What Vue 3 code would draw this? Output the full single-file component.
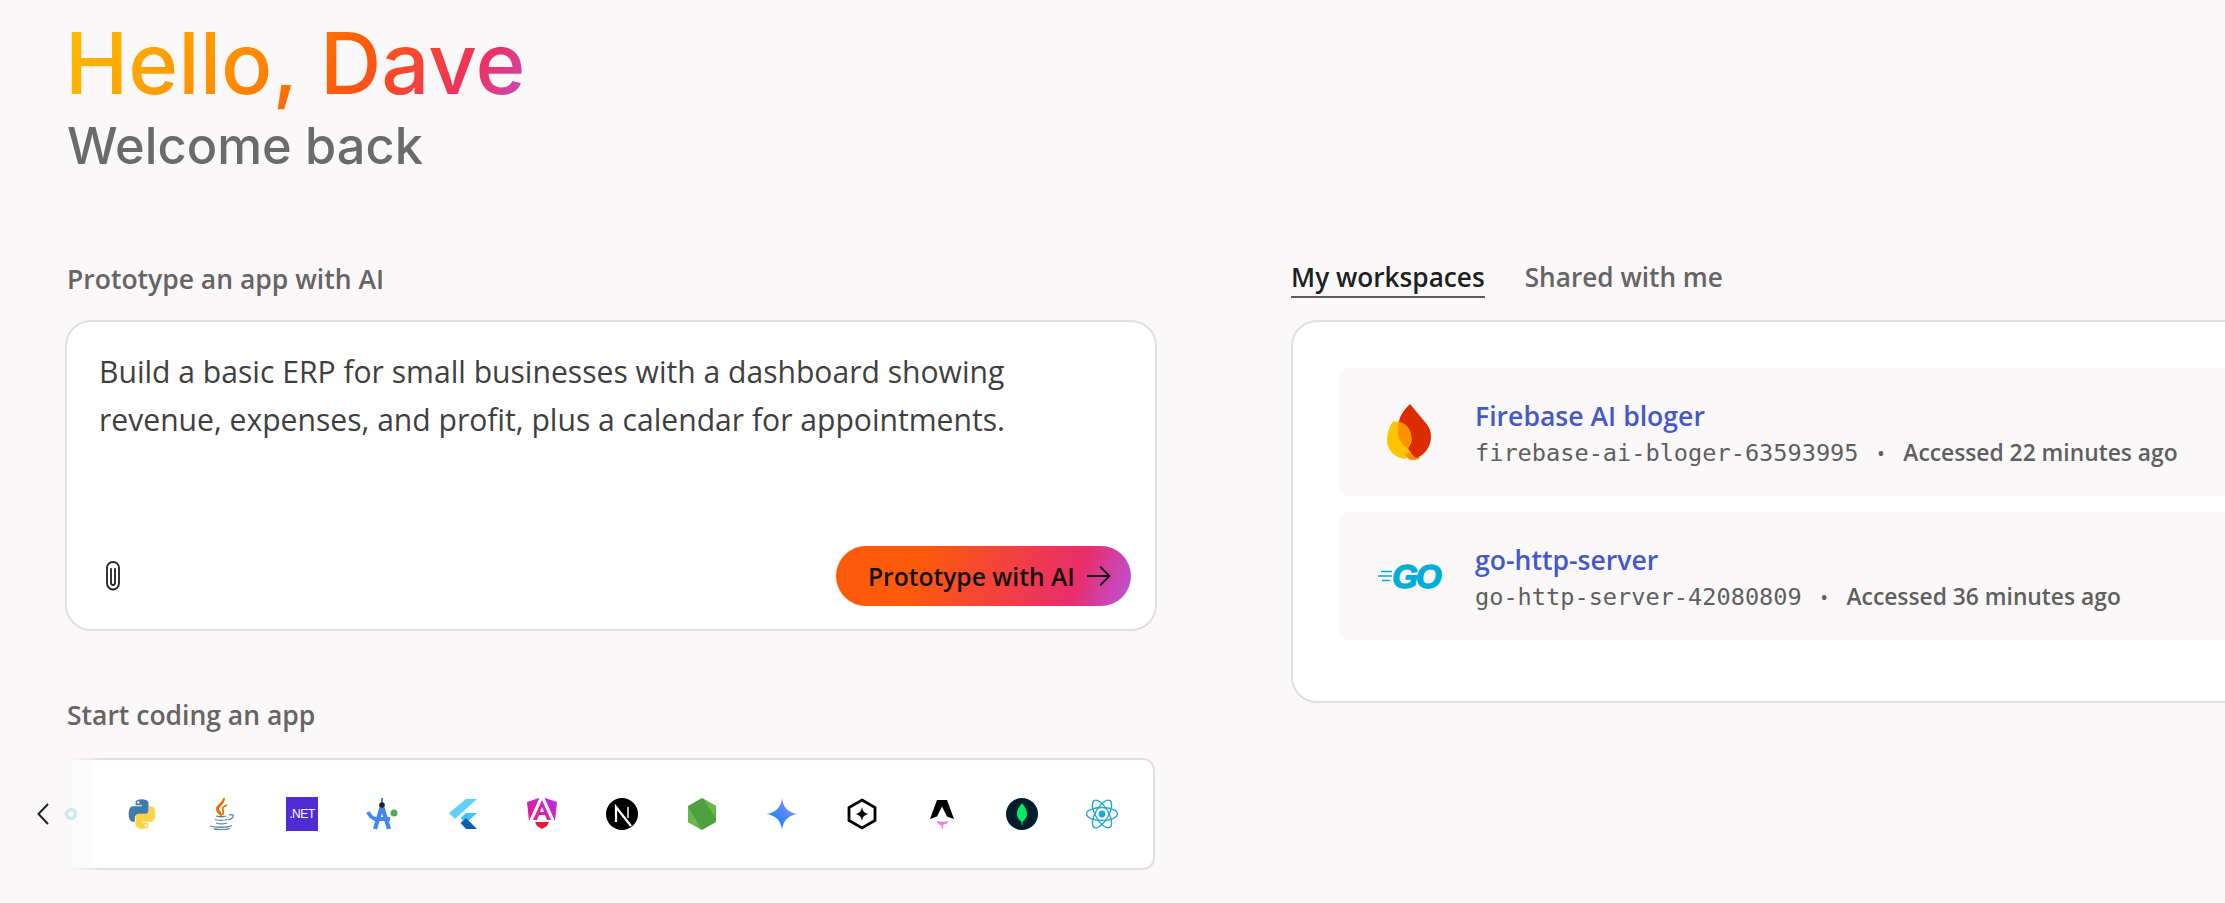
<script setup>
const accent = 'Prototype with AI'
</script>

<template>
  <main class="page">
    <header class="head">
      <h1 class="hello">Hello, Dave</h1>
      <p class="welcome">Welcome back</p>
    </header>

    <div class="cols">
      <section class="left">
        <h2 class="label first">Prototype an app with AI</h2>
        <div class="prompt">
          <p class="prompt-text">Build a basic ERP for small businesses with a dashboard showing revenue, expenses, and profit, plus a calendar for appointments.</p>
          <div class="prompt-foot">
            <svg class="clip" viewBox="0 0 16 30" fill="none" stroke="#1f1f1f" stroke-width="1.800" stroke-linecap="round">
              <path d="M2 6.500a6 5.500 0 0 1 12 0V22a6 6.500 0 0 1-12 0z" />
              <path d="M6 8v13.500a2 2.500 0 0 0 4 0V8" />
            </svg>
            <button class="cta">
              <span>{{ accent }}</span>
              <svg viewBox="0 0 26 22" width="26" height="22" fill="none" stroke="#111" stroke-width="2"><path d="M0 11h24M14 1l10 10-10 10" /></svg>
            </button>
          </div>
        </div>

        <h2 class="label second">Start coding an app</h2>
        <div class="strip">
          <svg class="chev" viewBox="0 0 12 22" fill="none" stroke="#222" stroke-width="2"><path d="M11 1 1.500 11 11 21" /></svg>
          <div class="icons">
            <svg class="ic ghost" viewBox="0 0 32 32" fill="none" stroke="#5fc0dc" stroke-width="3.500"><circle cx="25" cy="16" r="4.500" /></svg>

            <svg class="ic" viewBox="0 0 24 24">
              <path fill="#3f7cad" d="M11.900 1C6.900 1 7.200 3.200 7.200 3.200v2.300h4.800v.7H5.300S2 5.800 2 11.900s2.900 5.900 2.900 5.900h1.700v-2.800s-.1-2.900 2.800-2.900h4.800s2.700 0 2.700-2.600V4.100S17 1 11.900 1z" />
              <path fill="#ffd343" d="M12.100 23c5 0 4.700-2.200 4.700-2.200v-2.300H12v-.7h6.700s3.300.4 3.300-5.700-2.900-5.900-2.900-5.900h-1.700V9s.1 2.900-2.800 2.900H9.800s-2.700 0-2.700 2.600v5.400S6.900 23 12.100 23z" />
              <circle cx="9.200" cy="3.400" r=".9" fill="#fff" /><circle cx="14.800" cy="20.600" r=".9" fill="#fff" />
            </svg>

            <svg class="ic" viewBox="0 0 32 32" fill="none">
              <path stroke="#e76f00" stroke-width="1.700" d="M18 0c1 5-6 8-6 11 0 2 3 3 3 6-2-2-5-3-4-7 1-4 7-5 7-10zM21 7c-4 2-5 3-4 5 .5 1.500 1 2-.5 5" />
              <path stroke="#5382a1" stroke-width="1.300" d="M10 18c3 1 8 1 10 0M9 21.500c3 1 9 1 12 0M23 17c3-1 5 0 4 2s-3 2-5 3M10 25c3 1 8 1 11 0M4 28c4 1.500 18 2 22-.5M8 31c5 .7 12 .7 16-.5" />
            </svg>

            <div class="net"><span>.NET</span></div>

            <svg class="ic" viewBox="0 0 32 32" fill="none" stroke="#4285f4">
              <circle cx="28" cy="15" r="3.500" fill="#4fa85a" stroke="none" />
              <path stroke-width="2" d="M16 0v6" />
              <path stroke-width="4.200" d="M16 8 9 31M16 8l7 23" />
              <path stroke-width="3.800" d="M2 14c2 4 4 6 7 7h15" />
              <circle cx="16" cy="7" r="2.800" fill="#202124" stroke="none" />
            </svg>

            <svg class="ic" viewBox="0 0 32 32">
              <path fill="#5fd0fa" d="M20 1h11L9 21 3 15z" />
              <path fill="#3cc2f7" d="M20 15h11L20 25l-5.500-5z" />
              <path fill="#0f5fa8" d="M14.500 25l5.500-5 5 5 6 6H20z" />
            </svg>

            <svg class="ic" viewBox="0 0 32 32">
              <defs>
                <linearGradient id="ang" x1="0" y1="1" x2="1" y2="0"><stop offset="0" stop-color="#f0197d" /><stop offset="1" stop-color="#b32bf5" /></linearGradient>
              </defs>
              <path fill="url(#ang)" d="M13 0 1 4l2 19L13 1zM19 0l12 4-2 19L19 1zM16 2 7 22h4l2-5h6l2 5h4zM14 14l2-5 2 5z" />
              <path fill="#f0153f" d="M9 24h14l-2 4-5 3-5-3z" />
            </svg>

            <svg class="ic" viewBox="0 0 32 32">
              <circle cx="16" cy="16" r="16" fill="#000" />
              <path fill="none" stroke="#fff" stroke-width="2.200" d="M10 24V9l15 19" />
              <path fill="none" stroke="#bbb" stroke-width="2" d="M22 9v11" />
            </svg>

            <svg class="ic" viewBox="0 0 32 32">
              <path fill="#4e9f3e" d="M16 0l14 8v16l-14 8-14-8V8z" />
              <path fill="#6cbb4e" d="M16 0l14 8-.5 12L17 0zM2 8l13 23-13-7z" opacity=".85" />
            </svg>

            <svg class="ic" viewBox="0 0 32 32">
              <defs>
                <linearGradient id="gem" x1="0" y1="1" x2="1" y2="0"><stop offset=".3" stop-color="#1f86ff" /><stop offset="1" stop-color="#b08cf5" /></linearGradient>
              </defs>
              <path fill="url(#gem)" d="M16 0c1 9 6 15 16 16-10 1-15 7-16 16-1-9-6-15-16-16 10-1 15-7 16-16z" />
            </svg>

            <svg class="ic" viewBox="0 0 32 32">
              <path fill="none" stroke="#000" stroke-width="2.800" d="M16 2l13 7.500v13L16 30 3 22.500v-13z" />
              <path fill="#000" d="M16 9c.8 4.500 2.500 6.200 7 7-4.500.8-6.200 2.500-7 7-.8-4.500-2.500-6.200-7-7 4.500-.8 6.200-2.500 7-7z" />
            </svg>

            <svg class="ic" viewBox="0 0 32 32">
              <path fill="#000" d="M11 2h10l7 19-7-2.500-5-10-5 10L4 21z" />
              <path fill="#ff7ad9" d="M10 23c4 1 9 1 13 0l-3 3-2.500.5-1 5.500-1.500-5c-2 0-3.500-2-5-4z" />
            </svg>

            <svg class="ic" viewBox="0 0 32 32">
              <circle cx="16" cy="16" r="16" fill="#001e2b" />
              <path fill="#00ed64" d="M16 5c2 3 5 6 5 11 0 4-3 6.500-4.300 7.500L16.400 27h-.8l-.3-3.500C14 22.500 11 20 11 16c0-5 3-8 5-11z" />
            </svg>

            <svg class="ic" viewBox="0 0 32 32" fill="none" stroke="#22a6d6" stroke-width="1.400">
              <circle cx="16" cy="16" r="3.400" fill="#22a6d6" stroke="none" />
              <ellipse cx="16" cy="16" rx="15.500" ry="6.500" />
              <ellipse cx="16" cy="16" rx="15.500" ry="6.500" transform="rotate(60 16 16)" />
              <ellipse cx="16" cy="16" rx="15.500" ry="6.500" transform="rotate(120 16 16)" />
            </svg>
          </div>
          <div class="fade"></div>
        </div>
      </section>

      <section class="right">
        <nav class="tabs">
          <span class="tab active">My workspaces</span>
          <span class="tab">Shared with me</span>
        </nav>
        <div class="panel">
          <article class="row">
            <div class="logo">
              <svg width="44" height="56" viewBox="0 0 44 56">
                <defs>
                  <clipPath id="yel"><path d="M6 17.500h6C22 19 28 28 24 42c-2 7-6 13-6 13C8 53 0 46 0 36c0-8 2-14 6-18.500z" /></clipPath>
                </defs>
                <path fill="#ffc400" d="M6 17.500h6C20 18 26 25 26 35c0 8-2 16-8 20C8 54 0 46 0 36c0-7 2-13 6-18.500z" />
                <path fill="#ff9100" d="M18 50c3-1 6-2 8-4l7 8c-3 2-6 2-8 2-3 0-5-2-7-6z" />
                <path fill="#dd2c00" d="M23 0l15 18c4 4 6 9 6 15 0 10-7 19-15 21-3-2-7-8-8-10 4-4 4-9 3-13-1-5-5-10-12-13 1-7 5-12 11-18z" />
                <path fill="#ff9100" clip-path="url(#yel)" d="M12 17.500c7 2 12 7 12 15 0 4-1 8-3 12-6-3-10-10-10-17 0-4 0-7 1-10z" />
              </svg>
            </div>
            <div class="meta">
              <a class="title">Firebase AI bloger</a>
              <p class="sub"><code>firebase-ai-bloger-63593995</code><i>•</i><span>Accessed 22 minutes ago</span></p>
            </div>
          </article>
          <article class="row">
            <div class="logo go">
              <svg class="go-lines" width="14" height="12" viewBox="0 0 14 12" stroke="#00add8" stroke-width="1.500"><path d="M3 1.500h11M0 6h14M4 10.500h8" /></svg>
              <span>GO</span>
            </div>
            <div class="meta">
              <a class="title">go-http-server</a>
              <p class="sub"><code>go-http-server-42080809</code><i>•</i><span>Accessed 36 minutes ago</span></p>
            </div>
          </article>
        </div>
      </section>
    </div>
  </main>
</template>

<style>
html, body { margin: 0; background: #faf8f9; overflow: hidden; }
</style>

<style scoped>
.page {
  width: 2225px;
  height: 903px;
  overflow: hidden;
  box-sizing: border-box;
  padding: 18px 0 0 65px;
  background: #faf8f9;
  font-family: "Open Sans", "Noto Sans", sans-serif;
  color: #5f5f5f;
}
.head { height: 244px; }
.hello {
  margin: 0;
  width: fit-content;
  font: 500 85px/92px Inter, sans-serif;
  background: linear-gradient(125deg, #ffc000 0%, #ff8c00 40%, #ff5a0a 62%, #ee3060 85%, #c44bc4 100%);
  -webkit-background-clip: text;
  background-clip: text;
  color: transparent;
}
.welcome {
  margin: 6px 0 0 2px;
  font: 500 50.500px/60px Inter, sans-serif;
  color: #6b6b6b;
}
.cols { display: flex; gap: 134px; align-items: flex-start; }
.left { width: 1092px; flex: none; position: relative; }
.right { width: 1000px; flex: none; }
.label { margin: 0 0 0 2px; font-size: 26.500px; font-weight: 600; color: #666464; }
.label.first { height: 58px; line-height: 34px; }
.prompt {
  box-sizing: border-box;
  height: 311px;
  display: flex;
  flex-direction: column;
  justify-content: space-between;
  background: #fff;
  border: 2px solid #e0dedf;
  border-radius: 26px;
  padding: 26px 24px 23px 32px;
}
.prompt-text { margin: 0; font-size: 30.100px; line-height: 48px; color: #3f3f3f; width: 1000px; }
.prompt-foot { display: flex; align-items: center; justify-content: space-between; }
.clip { width: 16px; height: 30px; margin-left: 6px; }
.cta {
  display: flex;
  align-items: center;
  gap: 12px;
  height: 60px;
  width: 295px;
  box-sizing: border-box;
  padding: 0 20px 0 32px;
  border: 0;
  border-radius: 30px;
  background: linear-gradient(110deg, #ff5a0a 0%, #ff5a0a 28%, #e92d6b 80%, #b854e0 100%);
  font: 600 24.600px "Open Sans", sans-serif;
  color: #111;
  white-space: nowrap;
}
.label.second { margin-top: 66px; height: 61px; line-height: 36px; }
.strip {
  position: relative;
  box-sizing: border-box;
  width: 1090px;
  height: 112px;
  background: #fff;
  border: 2px solid #e0dedf;
  border-radius: 12px;
}
.chev { position: absolute; left: -30px; top: 43px; width: 12px; height: 22px; }
.icons { height: 100%; display: flex; align-items: center; gap: 48px; margin-left: -21px; }
.ic { width: 32px; height: 32px; flex: none; }
.ghost { position: relative; z-index: 1; opacity: .28; }
.net { width: 32px; height: 34px; flex: none; background: #512bd4; display: flex; align-items: center; justify-content: center; }
.net span { font: 400 12px "Liberation Sans", sans-serif; color: #fff; letter-spacing: -.4px; }
.fade {
  position: absolute;
  left: -2px; top: -2px; bottom: -2px;
  width: 38px;
  background: linear-gradient(90deg, #faf8f9 0%, rgba(250,248,249,.75) 40%, rgba(255,255,255,0) 100%);
}
.tabs { display: flex; gap: 40px; height: 58px; }
.tab { height: 30px; padding-bottom: 4px; line-height: 30px; font-size: 26.200px; font-weight: 600; color: #666464; }
.tab.active { color: #1f1f1f; border-bottom: 2px solid #5f5c5c; }
.panel {
  box-sizing: border-box;
  height: 383px;
  background: #fff;
  border: 2px solid #e0dedf;
  border-radius: 26px;
  padding: 46px 0 0 46px;
  display: flex;
  flex-direction: column;
  gap: 16px;
}
.row {
  display: flex;
  align-items: center;
  height: 128px;
  gap: 36px;
  padding-left: 40px;
  background: #faf8f9;
  border-radius: 10px;
}
.logo { width: 60px; flex: none; display: flex; align-items: center; justify-content: center; }
.go { gap: 0; color: #00add8; }
.go-lines { flex: none; }
.go span { font: italic 700 33px/1 "Liberation Sans", sans-serif; letter-spacing: -2px; -webkit-text-stroke: 1.400px #00add8; }
.meta { display: flex; flex-direction: column; gap: 3px; padding-top: 4px; }
.title { font-size: 26.600px; font-weight: 600; color: #4558c8; line-height: 34px; }
.sub { margin: 0; display: flex; align-items: center; font-size: 22.800px; font-weight: 600; line-height: 34px; color: #5f5f5f; }
.sub code { font: 400 23.600px "DejaVu Sans Mono", monospace; }
.sub i { font-style: normal; margin: 0 19px; font-size: 18px; }
</style>
